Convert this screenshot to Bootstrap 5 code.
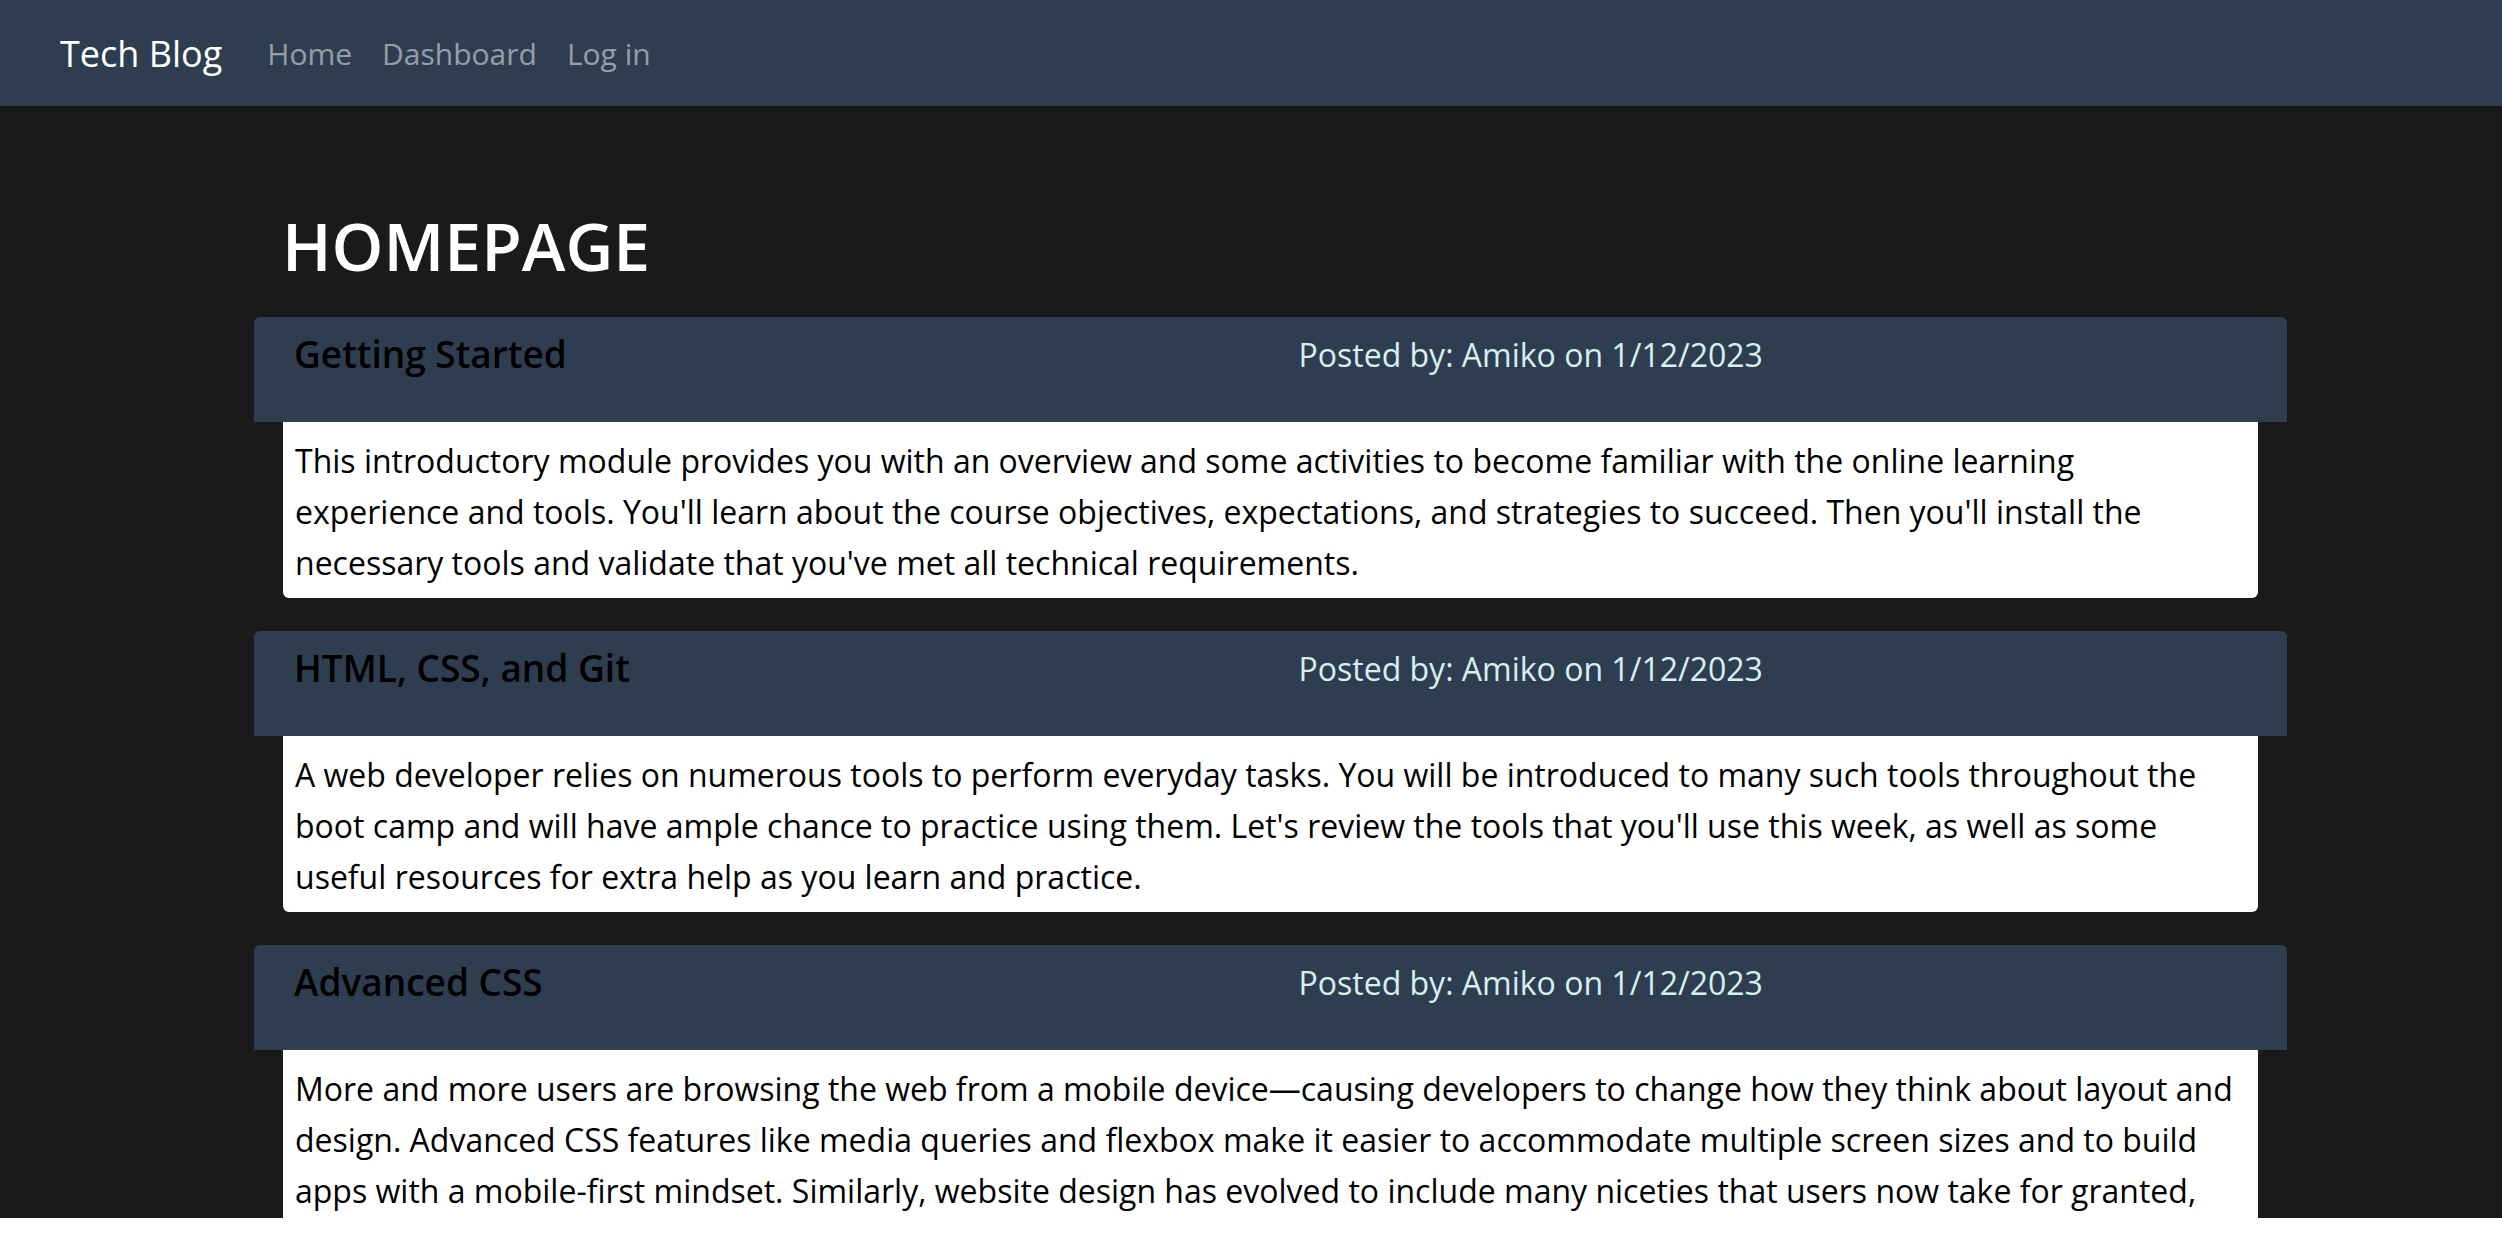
<!DOCTYPE html>
<html lang="en">
<head>
<meta charset="utf-8">
<meta name="viewport" content="width=device-width, initial-scale=1">
<title>Tech Blog</title>
<link href="https://cdn.jsdelivr.net/npm/bootstrap@5.3.0/dist/css/bootstrap.min.css" rel="stylesheet">
<style>
  body { font-family: "Open Sans", "Noto Sans", sans-serif; font-size: 32px; line-height: 51px; color: #000; background: #fff; }
  .site-nav { height: 106px; padding: 0 60px; background: #2e3e50; }
  .site-nav .navbar-brand { font-size: 36px; margin-right: 30px; padding: 0; }
  .site-nav .navbar-nav .nav-link { font-size: 30px; padding: 0 15px; color: rgba(255, 255, 255, .5); }
  .site-nav .navbar-nav .nav-link:hover { color: #fff; }
  .blog-page { background: #1a1a1a; }
  .blog-main { padding: 99px 215px 0 254px; }
  .page-title { font-size: 66px; line-height: 80px; font-weight: 600; color: #fff; margin: 0 0 32px; padding-left: 28px; }
  .post { margin-bottom: 33px; }
  .post-head { min-height: 105px; padding: 12px; background: #2e3e50; border-radius: 6px 6px 0 0; }
  .post-head .row { --bs-gutter-x: 56px; margin: 0; }
  .post-title { font-size: 37px; line-height: 50px; font-weight: 600; color: #000; margin: 0; }
  .post-meta { color: #d6f0f2; }
  .post-body { margin: 0 29px; padding: 13px 0 10px 12px; background: #fff; border-radius: 0 0 6px 6px; }
  .page-end { height: 23px; }
</style>
</head>
<body class="vh-100 d-flex flex-column overflow-hidden">
<div class="blog-page flex-grow-1 overflow-hidden">
  <nav class="site-nav navbar navbar-expand navbar-dark justify-content-start">
    <a class="navbar-brand" href="#">Tech Blog</a>
    <ul class="navbar-nav">
      <li class="nav-item"><a class="nav-link" href="#">Home</a></li>
      <li class="nav-item"><a class="nav-link" href="#">Dashboard</a></li>
      <li class="nav-item"><a class="nav-link" href="#">Log in</a></li>
    </ul>
  </nav>
  <main class="blog-main">
    <h1 class="page-title">HOMEPAGE</h1>
    <article class="post">
      <header class="post-head">
        <div class="row">
          <div class="col-6"><h2 class="post-title">Getting Started</h2></div>
          <div class="col-6 post-meta">Posted by: Amiko on 1/12/2023</div>
        </div>
      </header>
      <div class="post-body">This introductory module provides you with an overview and some activities to become familiar with the online learning<br>
        experience and tools. You'll learn about the course objectives, expectations, and strategies to succeed. Then you'll install the necessary tools and validate that you've met all technical requirements.</div>
    </article>
    <article class="post">
      <header class="post-head">
        <div class="row">
          <div class="col-6"><h2 class="post-title">HTML, CSS, and Git</h2></div>
          <div class="col-6 post-meta">Posted by: Amiko on 1/12/2023</div>
        </div>
      </header>
      <div class="post-body">A web developer relies on numerous tools to perform everyday tasks. You will be introduced to many such tools throughout the boot camp and will have ample chance to practice using them. Let's review the tools that you'll use this week, as well as some<br>
        useful resources for extra help as you learn and practice.</div>
    </article>
    <article class="post">
      <header class="post-head">
        <div class="row">
          <div class="col-6"><h2 class="post-title">Advanced CSS</h2></div>
          <div class="col-6 post-meta">Posted by: Amiko on 1/12/2023</div>
        </div>
      </header>
      <div class="post-body">More and more users are browsing the web from a mobile device—causing developers to change how they think about layout and design. Advanced CSS features like media queries and flexbox make it easier to accommodate multiple screen sizes and to build<br>
        apps with a mobile-first mindset. Similarly, website design has evolved to include many niceties that users now take for granted,</div>
    </article>
  </main>
</div>
<div class="page-end flex-shrink-0"></div>
<script src="https://cdn.jsdelivr.net/npm/bootstrap@5.3.0/dist/js/bootstrap.bundle.min.js"></script>
</body>
</html>
